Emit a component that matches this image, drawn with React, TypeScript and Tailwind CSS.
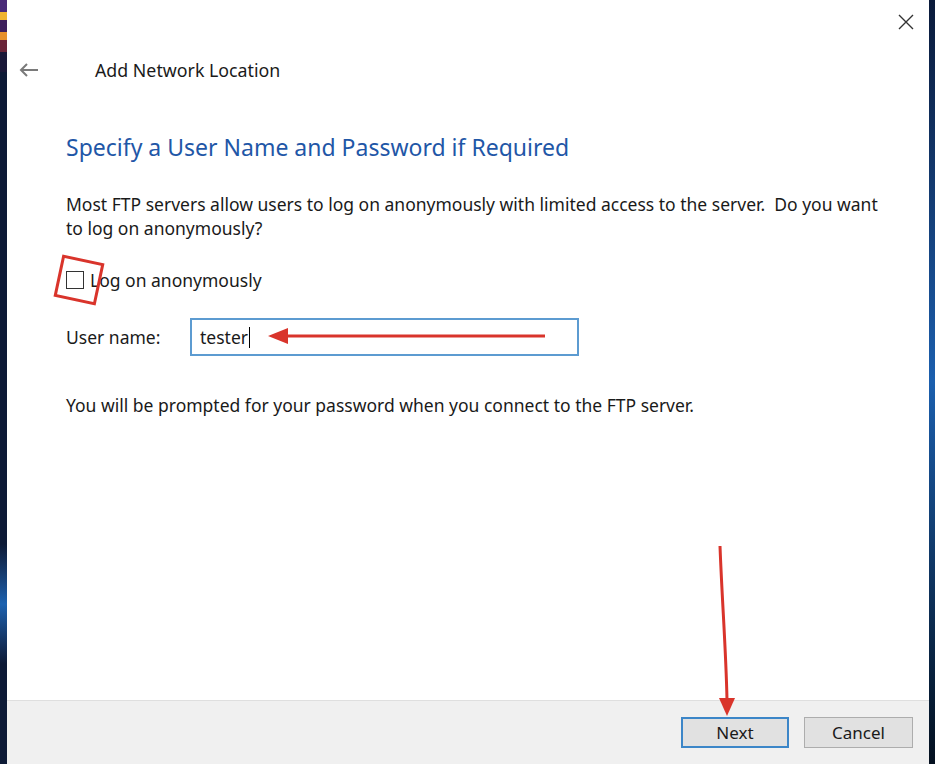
import React from 'react';

const font = { fontFamily: '"Noto Sans", "Open Sans", sans-serif' };

function BackArrow() {
  return (
    <svg width="20" height="16" viewBox="0 0 20 16" fill="none" stroke="#7a7a7a" strokeWidth="2">
      <path d="M19 8H2" />
      <path d="M8 2L2 8l6 6" />
    </svg>
  );
}

function CloseX() {
  return (
    <svg width="16" height="16" viewBox="0 0 16 16" stroke="#333" strokeWidth="1.4">
      <path d="M1 1l14 14M15 1L1 15" />
    </svg>
  );
}

export default function App() {
  return (
    <div className="relative flex h-[764px] w-full overflow-hidden bg-white" style={font}>
      {/* desktop behind the dialog */}
      <div className="flex w-[7px] flex-col bg-[#0d1a36]">
        <div className="h-[12px] bg-[#4a2a78]" />
        <div className="h-[8px] bg-[#f0b430]" />
        <div className="h-[12px] bg-[#3e1f5c]" />
        <div className="h-[8px] bg-[#e6902c]" />
        <div className="h-[12px] bg-[#6a2438]" />
        <div className="h-[20px] bg-[#1a1838]" />
        <div className="flex-1" />
        <div className="h-[120px] bg-gradient-to-b from-[#0d1a36] via-[#1c62b0] to-[#0d1a36]" />
        <div className="h-[100px]" />
      </div>

      <div className="flex flex-1 flex-col">
        {/* title bar */}
        <div className="flex h-[44px] justify-end pr-[15px] pt-[14px]">
          <CloseX />
        </div>
        <div className="flex h-[52px] items-center pl-[12px]">
          <BackArrow />
          <span className="ml-[56px] text-[17.8px] text-[#1a1a1a]">Add Network Location</span>
        </div>

        <div className="flex-1 pl-[59px] pr-[40px] pt-[35px]">
          <h1 className="text-[23px] leading-[32px] text-[#1f57a7]">
            Specify a User Name and Password if Required
          </h1>
          <p className="mt-[29px] max-w-[825px] text-[17.5px] leading-[24px] text-[#1a1a1a]">
            Most FTP servers allow users to log on anonymously with limited access to the server.&nbsp; Do you want to log on anonymously?
          </p>

          <label className="mt-[28px] flex items-center gap-[6px] text-[17.5px] leading-[24px] text-[#1a1a1a]">
            <span className="h-[18px] w-[18px] border border-[#333] bg-white" />
            <span>Log on anonymously</span>
          </label>

          <div className="mt-[26px] flex items-center">
            <span className="w-[124px] text-[17.5px] text-[#1a1a1a]">User name:</span>
            <div className="flex h-[38px] w-[389px] items-center border-2 border-[#5c9bd1] px-[8px] text-[17.5px] text-[#1a1a1a]">
              tester
              <span className="ml-[1px] h-[21px] w-px bg-black" />
            </div>
          </div>

          <p className="mt-[37px] text-[17.5px] leading-[24px] text-[#1a1a1a]">
            You will be prompted for your password when you connect to the FTP server.
          </p>
        </div>

        {/* footer */}
        <div className="flex h-[64px] items-center justify-end gap-[15px] border-t border-[#dfdfdf] bg-[#f0f0f0] pr-[16px]">
          <button className="h-[31px] w-[108px] border-2 border-[#3c86c8] bg-[#e1e1e1] text-[17px] text-[#1a1a1a]">
            Next
          </button>
          <button className="h-[31px] w-[109px] border border-[#adadad] bg-[#e1e1e1] text-[17px] text-[#1a1a1a]">
            Cancel
          </button>
        </div>
      </div>

      <div className="w-[6px] bg-gradient-to-b from-[#0a1a3a] via-[#1b5fae] to-[#04101f]" />

      {/* annotations */}
      <svg className="pointer-events-none absolute left-0 top-0" width="935" height="764">
        <rect x="59" y="260" width="40" height="40" fill="none" stroke="#d9342b" strokeWidth="3" transform="rotate(12 79 280)" />
        <path d="M545 336H285" stroke="#d9342b" strokeWidth="3" />
        <path d="M268 336l20-8v16z" fill="#d9342b" />
        <path d="M720 546C722 600 726 650 727 700" stroke="#d9342b" strokeWidth="3" fill="none" />
        <path d="M727 716l-8-18h16z" fill="#d9342b" />
      </svg>
    </div>
  );
}
